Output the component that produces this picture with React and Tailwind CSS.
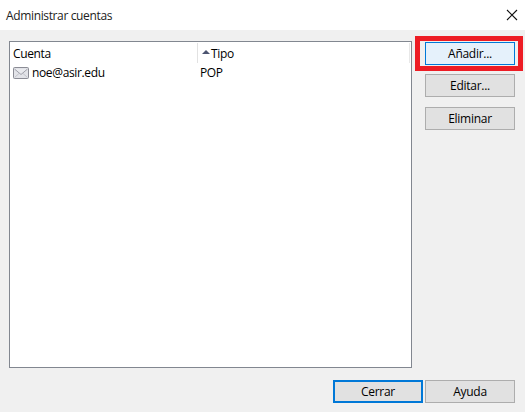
function DialogButton({ children, className = "border border-[#adadad] bg-[#e1e1e1]" }) {
  return (
    <button
      type="button"
      className={`flex h-[23px] w-[90px] shrink-0 items-center justify-center leading-[16px] tracking-[-0.28px] text-black ${className}`}
    >
      {children}
    </button>
  );
}

function EnvelopeIcon() {
  return (
    <svg width="16" height="12" viewBox="0 0 16 12" className="shrink-0">
      <rect x="0.5" y="0.5" width="15" height="11" rx="1" fill="#e2e3e8" stroke="#8b8c95" />
      <path d="M1.5 10.5 6 6.5M14.5 10.5 10 6.5" stroke="#c2c3ca" fill="none" />
      <path d="M1.5 2 8 7.5 14.5 2" stroke="#a0a1aa" fill="#e9eaee" />
    </svg>
  );
}

export default function App() {
  return (
    <div className="flex h-[412px] w-[525px] flex-col overflow-hidden bg-[#f0f0f0] font-['Open_Sans','Noto_Sans',sans-serif] text-[12px] tracking-[-0.36px] text-black">
      <header className="flex h-[30px] shrink-0 items-center justify-between bg-white pr-[7px] pl-[6px]">
        <h1 className="pt-px leading-[16px] text-[#222]">Administrar cuentas</h1>
        <button type="button" aria-label="Cerrar ventana">
          <svg width="12" height="12" viewBox="0 0 12 12" className="block">
            <path d="M1 1 11 11M11 1 1 11" stroke="#111" strokeWidth="1.1" fill="none" />
          </svg>
        </button>
      </header>

      <main className="flex h-[338px] shrink-0 pt-[6px] pl-[9px]">
        <section className="mt-[5px] h-[327px] w-[403px] shrink-0 border border-[#828790] bg-white">
          <div className="mt-px flex h-[20px]">
            <div className="w-[188px] border-r border-[#e2e2e2] pt-[3px] pl-[3px] leading-[16px]">
              Cuenta
            </div>
            <div className="flex w-[212px] border-r border-[#e8e8e8] pt-[3px] pl-[4px] leading-[16px]">
              <svg width="8" height="4" viewBox="0 0 8 4" className="mt-[4px] mr-px">
                <path d="M0 4 4 0 8 4Z" fill="#4c5470" />
              </svg>
              Tipo
            </div>
          </div>
          <div className="flex h-[20px] items-center pl-[3px]">
            <div className="flex w-[187px] items-center gap-[3px]">
              <EnvelopeIcon />
              <span className="leading-[16px]">noe@asir.edu</span>
            </div>
            <span className="leading-[16px]">POP</span>
          </div>
        </section>

        <aside className="ml-[3px] w-[108px]">
          <div className="flex h-[35px] items-center border-[5px] border-[#ed1c24] pt-px pb-px pl-[5px]">
            <DialogButton className="border border-[#0078d7] bg-[#e5f1fb]">Añadir...</DialogButton>
          </div>
          <div className="flex flex-col gap-[10px] pt-[3px] pl-[10px]">
            <DialogButton>Editar...</DialogButton>
            <DialogButton>Eliminar</DialogButton>
          </div>
        </aside>
      </main>

      <footer className="flex gap-[2px] pt-[12px] pl-[333px]">
        <DialogButton className="border-2 border-[#0078d7] bg-[#e1e1e1]">Cerrar</DialogButton>
        <DialogButton>Ayuda</DialogButton>
      </footer>
    </div>
  );
}
